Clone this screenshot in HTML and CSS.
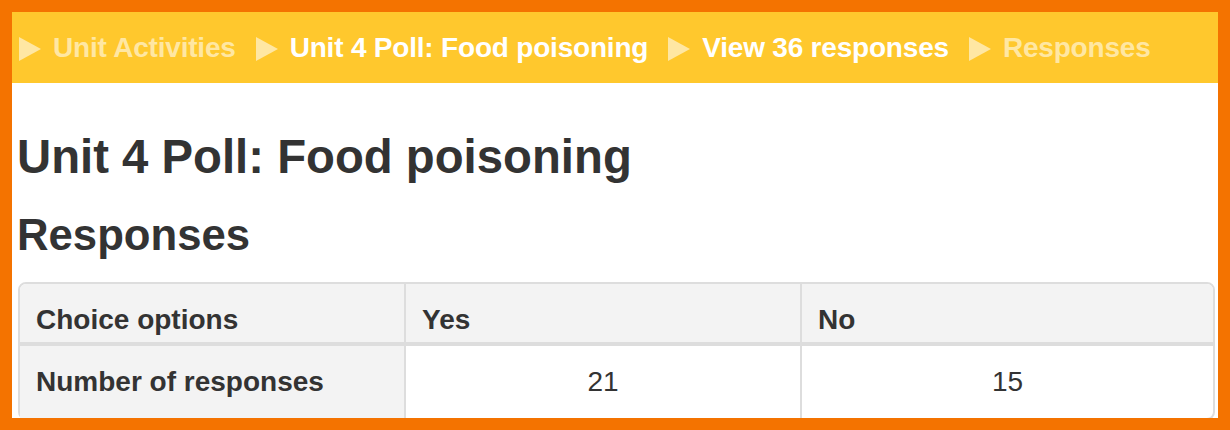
FILE: index.html
```html
<!DOCTYPE html>
<html lang="en">
<head>
<meta charset="utf-8">
<title>Unit 4 Poll: Food poisoning – Responses</title>
<link rel="stylesheet" href="styles.css">
</head>
<body>
<div class="frame">
  <nav class="crumbs">
    <a class="crumb faded" href="#"><span class="arrow"></span>Unit Activities</a>
    <a class="crumb" href="#"><span class="arrow"></span>Unit 4 Poll: Food poisoning</a>
    <a class="crumb" href="#"><span class="arrow"></span>View 36 responses</a>
    <span class="crumb faded"><span class="arrow"></span>Responses</span>
  </nav>
  <main class="content">
    <h1 class="title">Unit 4 Poll: Food poisoning</h1>
    <h2 class="subtitle">Responses</h2>
    <table class="results">
      <thead>
        <tr>
          <th class="col-label">Choice options</th>
          <th class="col-yes">Yes</th>
          <th class="col-no">No</th>
        </tr>
      </thead>
      <tbody>
        <tr>
          <th class="col-label">Number of responses</th>
          <td class="num">21</td>
          <td class="num">15</td>
        </tr>
      </tbody>
    </table>
  </main>
</div>
</body>
</html>
```

FILE: styles.css
```css
html, body {
  margin: 0;
  padding: 0;
}

body {
  background: #f47300;
  padding: 12px;
  font-family: "Liberation Sans", Arial, Helvetica, sans-serif;
  color: #333333;
}

.frame {
  background: #ffffff;
  height: 406px;
  overflow: hidden;
}

/* Breadcrumb bar */
.crumbs {
  background: #ffc82d;
  height: 71px;
  box-sizing: border-box;
  padding: 16px 0 15px 7px;
  display: flex;
  align-items: center;
  gap: 20px;
  font-size: 28px;
  line-height: 40px;
  font-weight: bold;
  letter-spacing: -0.2px;
}

.crumb {
  display: flex;
  align-items: center;
  color: #ffffff;
  text-decoration: none;
  white-space: nowrap;
}

.crumb.faded {
  color: #ffe7a3;
}

.arrow {
  width: 0;
  height: 0;
  border-left: 22px solid #ffe7a3;
  border-top: 12px solid transparent;
  border-bottom: 12px solid transparent;
  margin-right: 12px;
  margin-top: 1px;
}

/* Content */
.content {
  padding: 0 3px 0 6px;
}

.title {
  margin: 48px 0 0 -1px;
  font-size: 47.3px;
  line-height: 1.1;
  font-weight: bold;
  color: #333333;
}

.subtitle {
  margin: 28px 0 0 -1px;
  font-size: 43.7px;
  line-height: 1.1;
  font-weight: bold;
  color: #333333;
}

/* Results table */
.results {
  margin-top: 23px;
  width: 100%;
  border: 2px solid #dddddd;
  border-radius: 8px;
  border-collapse: separate;
  border-spacing: 0;
  font-size: 28px;
  line-height: 40px;
  table-layout: fixed;
}

.results th,
.results td {
  box-sizing: border-box;
  padding: 16px 16px 2px;
  text-align: left;
  vertical-align: top;
  color: #333333;
}

.results thead th {
  background: #f3f3f3;
  font-weight: bold;
  border-bottom: 2px solid #dddddd;
}

.results thead th:first-child {
  border-top-left-radius: 6px;
}

.results thead th:last-child {
  border-top-right-radius: 6px;
}

.results tbody th,
.results tbody td {
  border-top: 2px solid #dddddd;
  padding-bottom: 16px;
}

.results tbody th {
  background: #f3f3f3;
  font-weight: bold;
}

.results .col-label {
  width: 384px;
}

.results .col-yes {
  width: 396px;
}

.results th + th,
.results th + td,
.results td + td {
  border-left: 2px solid #dddddd;
}

.results td.num {
  text-align: center;
  font-weight: normal;
}
```
